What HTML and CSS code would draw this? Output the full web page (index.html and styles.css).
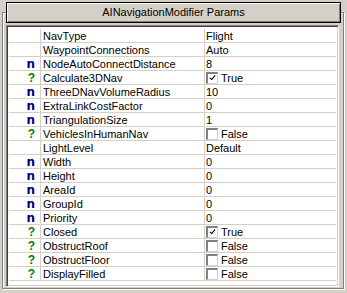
FILE: index.html
```html
<!DOCTYPE html>
<html lang="en">
<head>
    <meta charset="UTF-8">
    <title>AINavigationModifier Params</title>
    <link rel="stylesheet" href="styles.css">
</head>
<body>
    <div class="frame">
        <div class="title">AINavigationModifier Params</div>
        <div class="grid">
            <div class="row"><span class="ico"></span><span class="name">NavType</span><span class="val">Flight</span></div>
            <div class="row"><span class="ico"></span><span class="name">WaypointConnections</span><span class="val">Auto</span></div>
            <div class="row"><span class="ico num">n</span><span class="name">NodeAutoConnectDistance</span><span class="val">8</span></div>
            <div class="row"><span class="ico bool">?</span><span class="name">Calculate3DNav</span><span class="val"><span class="check on"></span>True</span></div>
            <div class="row"><span class="ico num">n</span><span class="name">ThreeDNavVolumeRadius</span><span class="val">10</span></div>
            <div class="row"><span class="ico num">n</span><span class="name">ExtraLinkCostFactor</span><span class="val">0</span></div>
            <div class="row"><span class="ico num">n</span><span class="name">TriangulationSize</span><span class="val">1</span></div>
            <div class="row"><span class="ico bool">?</span><span class="name">VehiclesInHumanNav</span><span class="val"><span class="check"></span>False</span></div>
            <div class="row"><span class="ico"></span><span class="name">LightLevel</span><span class="val">Default</span></div>
            <div class="row"><span class="ico num">n</span><span class="name">Width</span><span class="val">0</span></div>
            <div class="row"><span class="ico num">n</span><span class="name">Height</span><span class="val">0</span></div>
            <div class="row"><span class="ico num">n</span><span class="name">AreaId</span><span class="val">0</span></div>
            <div class="row"><span class="ico num">n</span><span class="name">GroupId</span><span class="val">0</span></div>
            <div class="row"><span class="ico num">n</span><span class="name">Priority</span><span class="val">0</span></div>
            <div class="row"><span class="ico bool">?</span><span class="name">Closed</span><span class="val"><span class="check on"></span>True</span></div>
            <div class="row"><span class="ico bool">?</span><span class="name">ObstructRoof</span><span class="val"><span class="check"></span>False</span></div>
            <div class="row"><span class="ico bool">?</span><span class="name">ObstructFloor</span><span class="val"><span class="check"></span>False</span></div>
            <div class="row"><span class="ico bool">?</span><span class="name">DisplayFilled</span><span class="val"><span class="check"></span>False</span></div>
        </div>
    </div>
</body>
</html>
```

FILE: styles.css
```css
body {
    margin: 0;
    background-color: #d4d0c8;
    font-family: "Liberation Sans", Arial, sans-serif;
    font-size: 11px;
    color: #000;
}
.frame {
    margin: 12px 3px 3px 2px;
    height: 275px;
    border: 1px solid #808080;
    box-shadow: inset 1px 1px 0 #fff, 1px 1px 0 #fff;
    padding: 0 2px 0 3px;
}
.title {
    margin: -11px 0 0 0;
    height: 19px;
    line-height: 19px;
    border: 1px solid #000;
    box-shadow: inset 1px 1px 0 #fff, inset -1px -1px 0 #808080;
    text-align: center;
    background-color: #d4d0c8;
}
.grid {
    margin-top: 2px;
    margin-right: 2px;
    height: 257px;
    background: #fff;
    border-top: 1px solid #808080;
    border-left: 1px solid #808080;
    border-right: 1px solid #fff;
    border-bottom: 1px solid #fff;
    box-shadow: inset 1px 1px 0 #404040, inset -1px -1px 0 #d4d0c8;
    padding: 3px 2px 0 2px;
}
.row {
    display: grid;
    grid-template-columns: 32px 164px 1fr;
    height: 14px;
    line-height: 14px;
}
.row span.ico,
.row span.name,
.row span.val {
    border-bottom: 1px solid #d4d0c8;
    border-right: 1px solid #d4d0c8;
    white-space: nowrap;
    overflow: hidden;
}
.row span.val {
    border-right: none;
    display: flex;
    align-items: center;
    padding-left: 1px;
}
.name {
    padding-left: 2px;
}
.ico {
    text-align: right;
    padding-right: 5px;
    font-weight: bold;
    font-size: 12px;
}
.num {
    color: #000080;
    font-family: "DejaVu Sans", sans-serif;
}
.bool {
    color: #008000;
}
.check {
    width: 9px;
    height: 9px;
    margin-right: 3px;
    background: #fff;
    border-top: 2px solid #808080;
    border-left: 2px solid #808080;
    border-right: 1px solid #d4d0c8;
    border-bottom: 1px solid #d4d0c8;
    box-sizing: content-box;
    position: relative;
    flex: none;
}
.check.on::after {
    content: "";
    position: absolute;
    left: 3px;
    top: 0;
    width: 2px;
    height: 5px;
    border: solid #000;
    border-width: 0 1.5px 1.5px 0;
    transform: rotate(40deg);
}
```
